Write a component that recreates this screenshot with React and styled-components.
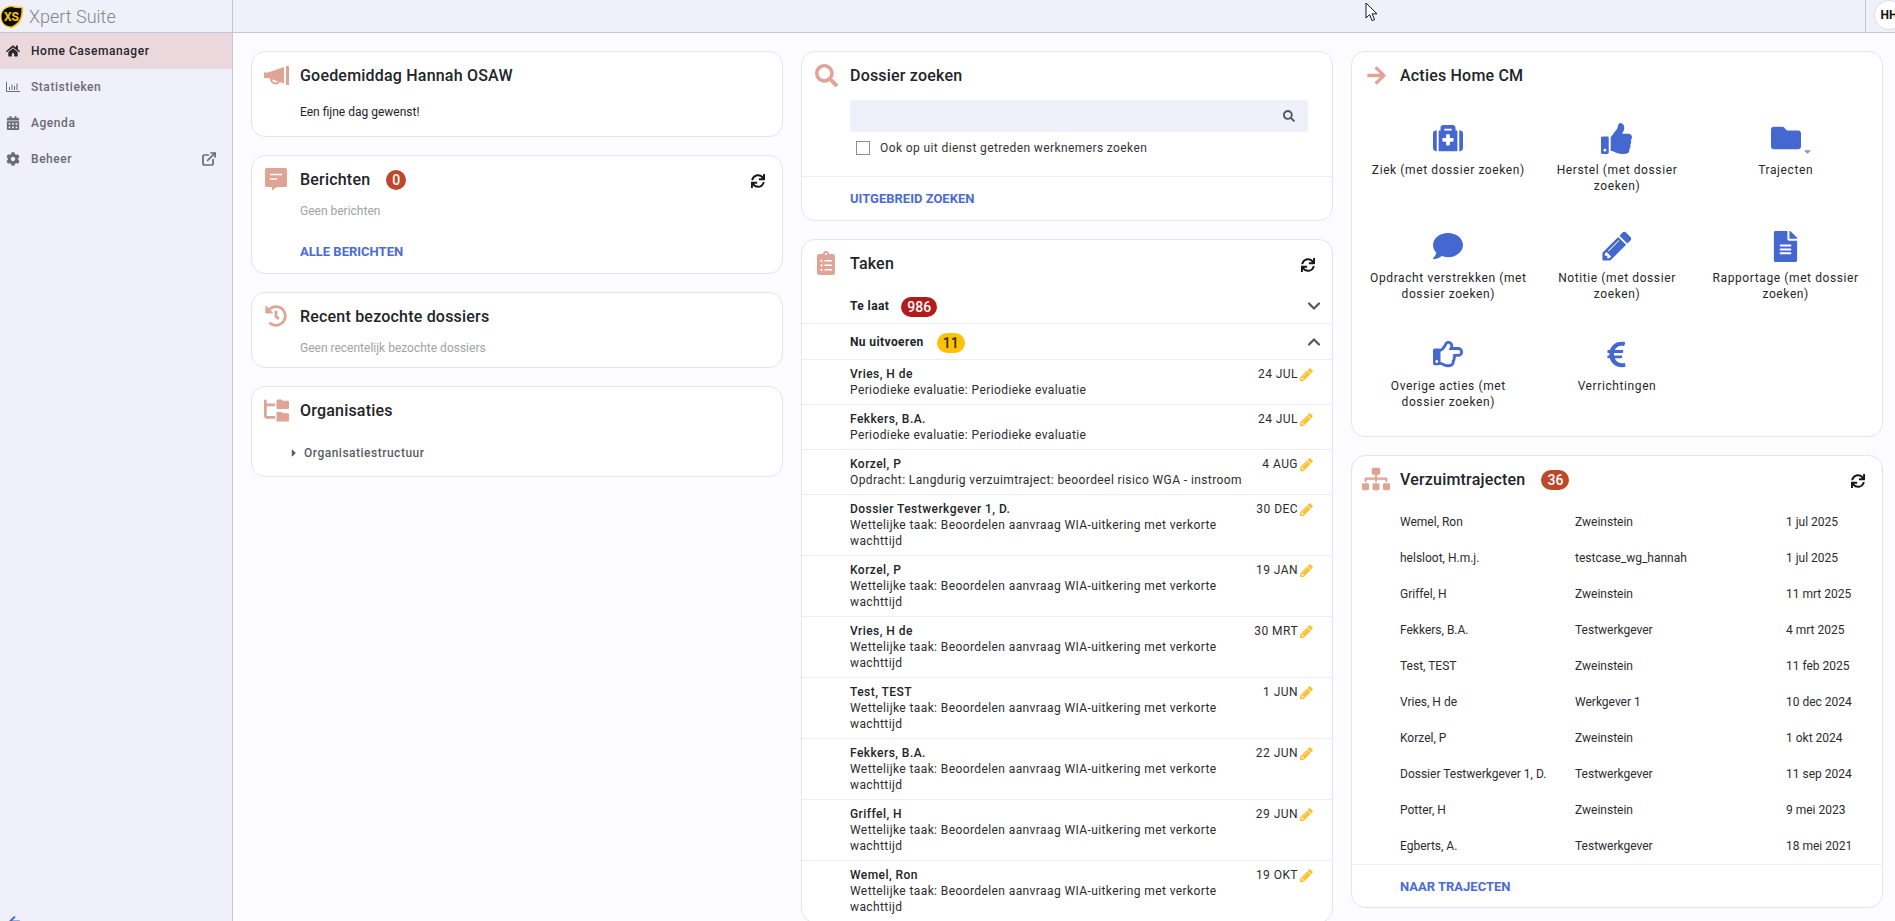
import React from 'react';
import styled, { createGlobalStyle } from 'styled-components';
import {
  FaArrowLeft, FaArrowRight, FaCalendarAlt, FaCaretDown, FaCaretRight,
  FaClipboardList, FaCog, FaComment, FaEuroSign, FaFileAlt, FaFolder, FaHistory, FaHome, FaMedkit,
  FaRegHandPointRight, FaSearch, FaSitemap, FaSync, FaThumbsUp,
} from 'react-icons/fa';
import { FaFolderTree } from 'react-icons/fa6';
import { FiChevronDown, FiChevronUp, FiExternalLink } from 'react-icons/fi';

const GlobalStyle = createGlobalStyle`
  html, body {
    margin: 0;
    height: 100%;
    overflow: hidden;
    background: #fcfbfe;
    font-family: Roboto, "Liberation Sans", sans-serif;
    font-size: 12px;
    color: #212529;
  }
`;

const Shell = styled.div`
  display: grid;
  grid-template-rows: 33px 1fr;
  height: 100vh;
  overflow: hidden;
`;

const Header = styled.header`
  position: relative;
  display: flex;
  align-items: stretch;
  background: #eff0f9;
  border-bottom: 1px solid #c5c6d4;
  overflow: hidden;
`;

const Brand = styled.div`
  display: flex;
  align-items: center;
  gap: 5px;
  width: 232px;
  flex-shrink: 0;
  border-right: 1px solid #c5c6d4;
`;

const BrandName = styled.span`
  font-size: 18px;
  font-weight: 300;
  color: #85858c;
`;

const HeaderRight = styled.div`
  display: flex;
  align-items: center;
  margin-left: auto;
  width: 30px;
  padding-left: 8px;
  box-sizing: border-box;
  border-left: 1px solid #c5c6d4;
`;

const Avatar = styled.div`
  display: flex;
  align-items: center;
  justify-content: center;
  flex-shrink: 0;
  width: 30px;
  height: 30px;
  margin-top: -2px;
  box-sizing: border-box;
  border: 1px solid #dcdce4;
  border-radius: 50%;
  background: #fff;
  font-size: 12px;
  font-weight: 700;
  color: #111;
`;

const Cursor = styled.svg`
  position: absolute;
  left: 1365px;
  top: 2px;
`;

const Body = styled.div`
  display: grid;
  grid-template-columns: 233px 1fr;
  min-height: 0;
`;

const Sidebar = styled.nav`
  display: flex;
  flex-direction: column;
  background: #eff0f9;
  border-right: 1px solid #c5c6d4;
  overflow: hidden;
`;

const NavItem = styled.div`
  display: flex;
  align-items: center;
  height: 36px;
  padding: 0 15px 0 6px;
  background: ${(p) => (p.$active ? '#ebd8dc' : 'transparent')};
  color: ${(p) => (p.$active ? '#26262c' : '#6b6b74')};
  font-weight: 500;
  letter-spacing: 0.55px;
`;

const NavIcon = styled.span`
  display: flex;
  justify-content: center;
  width: 14px;
  margin-right: 11px;
  font-size: 14px;
`;

const NavExternal = styled(FiExternalLink)`
  margin-left: auto;
  stroke-width: 2.6;
`;

const SidebarFoot = styled.div`
  margin-top: auto;
  height: 6px;
  padding-left: 8px;
  color: #4468d0;
  overflow: hidden;
`;

const Content = styled.main`
  display: grid;
  grid-template-columns: repeat(3, 532px);
  column-gap: 18px;
  align-items: start;
  padding: 18px 0 0 18px;
  min-height: 0;
  overflow: hidden;
`;

const Column = styled.div`
  display: flex;
  flex-direction: column;
  gap: 18px;
`;

const Card = styled.section`
  background: #fff;
  border: 1px solid #e3e4f0;
  border-radius: 14px;
  overflow: hidden;
`;

const CardHead = styled.div`
  display: flex;
  align-items: center;
  height: 46px;
  padding-right: 17px;
`;

const HeadIcon = styled.span`
  display: flex;
  justify-content: center;
  width: 48px;
  flex-shrink: 0;
  color: #e0a497;
`;

const CardTitle = styled.h2`
  margin: 0;
  font-size: 16px;
  font-weight: 500;
  letter-spacing: 0.2px;
  color: #212529;
`;

const Badge = styled.span`
  display: inline-flex;
  align-items: center;
  justify-content: center;
  box-sizing: border-box;
  min-width: 20px;
  height: 20px;
  margin: 2px 0 0 ${(p) => p.$gap || 16}px;
  padding: 0 ${(p) => p.$pad || 6}px;
  border-radius: 10px;
  background: ${(p) => p.$bg || '#c0472a'};
  color: ${(p) => p.$fg || '#fff'};
  font-size: 14px;
  font-weight: 500;
`;

const Refresh = styled(FaSync)`
  margin: 4px 0 0 auto;
  color: #17171b;
`;

const Text = styled.p`
  margin: 0;
  padding: ${(p) => p.$top || 0}px 0 ${(p) => p.$bottom || 0}px 48px;
  line-height: 16px;
  color: ${(p) => (p.$muted ? '#a2a2a8' : '#212529')};
`;

const PlainLink = styled.a`
  display: block;
  padding: 25px 0 13px 48px;
  line-height: 16px;
  font-size: 13px;
  font-weight: 700;
  color: #4a6bd6;
`;

const CardFoot = styled.div`
  display: flex;
  align-items: center;
  height: ${(p) => p.$height || 42}px;
  padding-left: 48px;
  border-top: 1px solid #ecedf5;
  font-size: 13px;
  font-weight: 700;
  color: #4a6bd6;
`;

const TreeRow = styled.div`
  display: flex;
  align-items: center;
  gap: 4px;
  padding: 12px 0 15px 36px;
  line-height: 16px;
  font-weight: 500;
  letter-spacing: 0.5px;
  color: #5c5c64;
`;

const SearchForm = styled.div`
  padding: 2px 24px 0 48px;
`;

const SearchBox = styled.div`
  display: flex;
  align-items: center;
  justify-content: flex-end;
  height: 32px;
  padding-right: 13px;
  border-radius: 3px;
  background: #eff0f9;
  color: #5a5a62;
`;

const CheckRow = styled.label`
  display: flex;
  align-items: center;
  gap: 10px;
  margin: 8px 0 20px 6px;
  line-height: 16px;
  letter-spacing: 0.4px;
  color: #33333a;
`;

const CheckBox = styled.span`
  width: 14px;
  height: 14px;
  box-sizing: border-box;
  border: 1px solid #8e8e94;
  background: #fff;
`;

const GroupRow = styled.div`
  display: flex;
  align-items: center;
  height: 35px;
  margin-top: ${(p) => (p.$first ? 2 : 0)}px;
  padding: 0 8px 0 48px;
  border-bottom: 1px solid #ecedf5;
`;

const GroupName = styled.strong`
  font-weight: 700;
  font-size: 12px;
  letter-spacing: 0.4px;
`;

const GroupChevron = styled.span`
  display: flex;
  margin-left: auto;
  color: #55555d;
  font-size: 20px;

  svg {
    stroke-width: 2.6;
  }
`;

const TaskRow = styled.div`
  display: flex;
  align-items: flex-start;
  justify-content: space-between;
  padding: 6px 18px 6px 48px;
  line-height: 16px;
  letter-spacing: 0.4px;
  border-bottom: 1px solid #ecedf5;
  color: #2b2b31;
`;

const TaskText = styled.div`
  width: 402px;
`;

const TaskName = styled.div`
  font-weight: 500;
  letter-spacing: 0.45px;
  color: #212529;
`;

const TaskDate = styled.div`
  display: flex;
  align-items: center;
  gap: 1px;
  letter-spacing: 0.45px;
  white-space: nowrap;
  color: #ffbf2e;
`;

const DateText = styled.span`
  color: #2b2b31;
`;

const ActionGrid = styled.div`
  display: grid;
  grid-template-columns: repeat(3, 1fr);
  grid-auto-rows: 108px;
  box-sizing: border-box;
  height: 338px;
  padding: 24px 12px 0;
`;

const Action = styled.div`
  display: flex;
  flex-direction: column;
  align-items: center;
  padding: 0 5px;
  text-align: center;
  line-height: 16px;
  letter-spacing: 0.6px;
  color: #26262c;
`;

const ActionIcon = styled.span`
  position: relative;
  display: flex;
  align-items: center;
  justify-content: center;
  height: 32px;
  margin-bottom: 8px;
  color: #4468d0;
`;

const ActionCaret = styled(FaCaretDown)`
  position: absolute;
  right: -12px;
  bottom: -3px;
  color: #7d93e0;
`;

const TrajectList = styled.div`
  display: grid;
  grid-template-columns: 175px 211px 1fr;
  grid-auto-rows: 36px;
  align-items: center;
  box-sizing: border-box;
  height: 362px;
  padding: 2px 0 0 48px;
  color: #2b2b31;
`;

const navItems = [
  { label: 'Home Casemanager', icon: <FaHome />, active: true },
  { label: 'Statistieken', icon: <BarsIcon /> },
  { label: 'Agenda', icon: <FaCalendarAlt /> },
  { label: 'Beheer', icon: <FaCog />, external: true },
];

const wia = 'Wettelijke taak: Beoordelen aanvraag WIA-uitkering met verkorte wachttijd';
const periodic = 'Periodieke evaluatie: Periodieke evaluatie';

const tasks = [
  ['Vries, H de', periodic, '24 JUL'],
  ['Fekkers, B.A.', periodic, '24 JUL'],
  ['Korzel, P', 'Opdracht: Langdurig verzuimtraject: beoordeel risico WGA - instroom', '4 AUG'],
  ['Dossier Testwerkgever 1, D.', wia, '30 DEC'],
  ['Korzel, P', wia, '19 JAN'],
  ['Vries, H de', wia, '30 MRT'],
  ['Test, TEST', wia, '1 JUN'],
  ['Fekkers, B.A.', wia, '22 JUN'],
  ['Griffel, H', wia, '29 JUN'],
  ['Wemel, Ron', wia, '19 OKT'],
];

const actions = [
  { label: 'Ziek (met dossier zoeken)', icon: <FaMedkit size={30} /> },
  { label: 'Herstel (met dossier zoeken)', icon: <FaThumbsUp size={31} /> },
  { label: 'Trajecten', icon: <><FaFolder size={30} /><ActionCaret size={11} /></> },
  { label: 'Opdracht verstrekken (met dossier zoeken)', icon: <FaComment size={30} /> },
  { label: 'Notitie (met dossier zoeken)', icon: <PencilIcon size={34} /> },
  { label: 'Rapportage (met dossier zoeken)', icon: <FaFileAlt size={31} /> },
  { label: 'Overige acties (met dossier zoeken)', icon: <FaRegHandPointRight size={30} /> },
  { label: 'Verrichtingen', icon: <FaEuroSign size={29} /> },
];

const trajects = [
  ['Wemel, Ron', 'Zweinstein', '1 jul 2025'],
  ['helsloot, H.m.j.', 'testcase_wg_hannah', '1 jul 2025'],
  ['Griffel, H', 'Zweinstein', '11 mrt 2025'],
  ['Fekkers, B.A.', 'Testwerkgever', '4 mrt 2025'],
  ['Test, TEST', 'Zweinstein', '11 feb 2025'],
  ['Vries, H de', 'Werkgever 1', '10 dec 2024'],
  ['Korzel, P', 'Zweinstein', '1 okt 2024'],
  ['Dossier Testwerkgever 1, D.', 'Testwerkgever', '11 sep 2024'],
  ['Potter, H', 'Zweinstein', '9 mei 2023'],
  ['Egberts, A.', 'Testwerkgever', '18 mei 2021'],
];

function Logo() {
  return (
    <svg width="24" height="25" viewBox="0 0 24 25">
      <path d="M12 1.500 C16 3 20 3 23 2.500 C23.500 12 22 20 12 24 C5 24 .5 19 .5 12.500 C.5 6 5 2 12 1.500 Z" fill="#ffc600" />
      <path d="M11.500 3 C15.500 4.200 19 4.300 21.400 4 C21.800 12 20 19 11.500 22.500 C5.500 22.500 1.500 18.500 1.500 12.700 C1.500 7 5.500 3.400 11.500 3 Z" fill="#0b0b0b" />
      <text x="11.500" y="17" textAnchor="middle" fontFamily="Roboto, sans-serif" fontSize="12" fontWeight="700" fill="#ffc600">XS</text>
    </svg>
  );
}

function BarsIcon() {
  return (
    <svg width="14" height="10" viewBox="0 0 14 10" fill="none" stroke="currentColor" strokeWidth="1">
      <path d="M.5 0v9.500H14M3.500 8V5M6 8V2.500M8.500 8V4M11 8V1.500" />
    </svg>
  );
}

function BullhornIcon() {
  return (
    <svg width="25" height="19" viewBox="0 0 25 19" fill="#e0a497">
      <path d="M0 6.500h4L20 1v16.500L4 12H0Z" />
      <rect x="22" width="3" height="19" rx=".5" />
      <path d="M7 12.500c0 3 2 5 4.500 5s3.500-1.500 4-3" fill="none" stroke="#e0a497" strokeWidth="2" />
    </svg>
  );
}

function MessageIcon() {
  return (
    <svg width="24" height="24" viewBox="0 0 24 24">
      <path d="M2.500 1h19A1.500 1.500 0 0 1 23 2.500v16a1.500 1.500 0 0 1-1.500 1.500H13l-5 3.500V20H2.500A1.500 1.500 0 0 1 1 18.500v-16A1.500 1.500 0 0 1 2.500 1Z" fill="#e0a497" />
      <path d="M6 7.500h12M6 12h7" stroke="#fff" strokeWidth="1.600" />
    </svg>
  );
}

function PencilIcon({ size }) {
  return (
    <svg width={size} height={size} viewBox="0 0 1792 1792" fill="currentColor">
      <path d="M491 1536l91-91-235-235-91 91v107h128v128h107zm523-928q0-22-22-22-10 0-17 7l-542 542q-7 7-7 17 0 22 22 22 10 0 17-7l542-542q7-7 7-17zm-54-192l416 416-832 832h-416v-416zm683 96q0 53-37 90l-166 166-416-416 166-165q36-38 90-38 53 0 91 38l235 234q37 39 37 91z" />
    </svg>
  );
}

function App() {
  return (
    <>
      <GlobalStyle />
      <Shell>
        <Header>
          <Brand>
            <Logo />
            <BrandName>Xpert Suite</BrandName>
          </Brand>
          <Cursor width="13" height="20" viewBox="0 0 13 20">
            <path d="M1 1v15l3.600-3.400 2.500 6 2.500-1-2.500-5.800H12Z" fill="#fff" stroke="#16161a" strokeWidth="1" />
          </Cursor>
          <HeaderRight>
            <Avatar>HH</Avatar>
          </HeaderRight>
        </Header>
        <Body>
          <Sidebar>
            {navItems.map((item) => (
              <NavItem key={item.label} $active={item.active}>
                <NavIcon>{item.icon}</NavIcon>
                {item.label}
                {item.external && <NavExternal size={16} />}
              </NavItem>
            ))}
            <SidebarFoot>
              <FaArrowLeft size={13} />
            </SidebarFoot>
          </Sidebar>
          <Content>
            <Column>
              <Card>
                <CardHead>
                  <HeadIcon><BullhornIcon /></HeadIcon>
                  <CardTitle>Goedemiddag Hannah OSAW</CardTitle>
                </CardHead>
                <Text $top={6} $bottom={16}>Een fijne dag gewenst!</Text>
              </Card>
              <Card>
                <CardHead>
                  <HeadIcon><MessageIcon /></HeadIcon>
                  <CardTitle>Berichten</CardTitle>
                  <Badge>0</Badge>
                  <Refresh size={14} />
                </CardHead>
                <Text $top={1} $muted>Geen berichten</Text>
                <PlainLink>ALLE BERICHTEN</PlainLink>
              </Card>
              <Card>
                <CardHead>
                  <HeadIcon><FaHistory size={22} /></HeadIcon>
                  <CardTitle>Recent bezochte dossiers</CardTitle>
                </CardHead>
                <Text $top={1} $bottom={11} $muted>Geen recentelijk bezochte dossiers</Text>
              </Card>
              <Card>
                <CardHead>
                  <HeadIcon><FaFolderTree size={25} /></HeadIcon>
                  <CardTitle>Organisaties</CardTitle>
                </CardHead>
                <TreeRow>
                  <FaCaretRight size={12} />
                  Organisatiestructuur
                </TreeRow>
              </Card>
            </Column>

            <Column>
              <Card>
                <CardHead>
                  <HeadIcon><FaSearch size={23} /></HeadIcon>
                  <CardTitle>Dossier zoeken</CardTitle>
                </CardHead>
                <SearchForm>
                  <SearchBox><FaSearch size={12} /></SearchBox>
                  <CheckRow>
                    <CheckBox />
                    Ook op uit dienst getreden werknemers zoeken
                  </CheckRow>
                </SearchForm>
                <CardFoot $height={43}>UITGEBREID ZOEKEN</CardFoot>
              </Card>
              <Card>
                <CardHead>
                  <HeadIcon><FaClipboardList size={24} /></HeadIcon>
                  <CardTitle>Taken</CardTitle>
                  <Refresh size={14} />
                </CardHead>
                <GroupRow $first>
                  <GroupName>Te laat</GroupName>
                  <Badge $bg="#b31b1b" $gap={12}>986</Badge>
                  <GroupChevron><FiChevronDown /></GroupChevron>
                </GroupRow>
                <GroupRow>
                  <GroupName>Nu uitvoeren</GroupName>
                  <Badge $bg="#ffc107" $fg="#2a2a20" $gap={13}>11</Badge>
                  <GroupChevron><FiChevronUp /></GroupChevron>
                </GroupRow>
                {tasks.map(([name, text, date], i) => (
                  <TaskRow key={i}>
                    <TaskText>
                      <TaskName>{name}</TaskName>
                      {text}
                    </TaskText>
                    <TaskDate><DateText>{date}</DateText><PencilIcon size={15} /></TaskDate>
                  </TaskRow>
                ))}
              </Card>
            </Column>

            <Column>
              <Card>
                <CardHead>
                  <HeadIcon><FaArrowRight size={21} /></HeadIcon>
                  <CardTitle>Acties Home CM</CardTitle>
                </CardHead>
                <ActionGrid>
                  {actions.map((action) => (
                    <Action key={action.label}>
                      <ActionIcon>{action.icon}</ActionIcon>
                      {action.label}
                    </Action>
                  ))}
                </ActionGrid>
              </Card>
              <Card>
                <CardHead>
                  <HeadIcon><FaSitemap size={28} /></HeadIcon>
                  <CardTitle>Verzuimtrajecten</CardTitle>
                  <Badge>36</Badge>
                  <Refresh size={14} />
                </CardHead>
                <TrajectList>
                  {trajects.flat().map((cell, i) => (
                    <span key={i}>{cell}</span>
                  ))}
                </TrajectList>
                <CardFoot>NAAR TRAJECTEN</CardFoot>
              </Card>
            </Column>
          </Content>
        </Body>
      </Shell>
    </>
  );
}

export default App;
